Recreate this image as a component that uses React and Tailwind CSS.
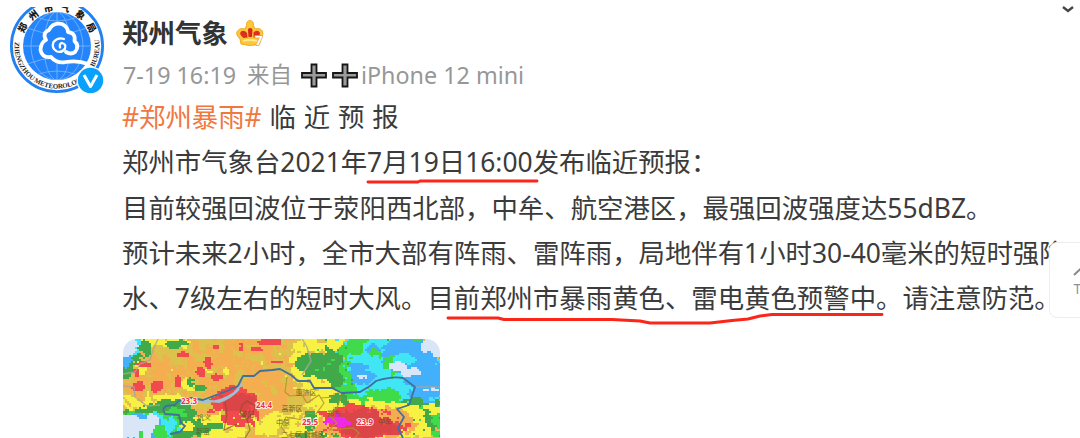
import React from "react";

const PALETTE = {
  m: "#dcc24c", o: "#f5ae4f", y: "#f6f142", r: "#f04a4e", R: "#dc4648",
  g: "#42a94a", G: "#40db4a", c: "#40e6f3", b: "#43b0fb", w: "#d9e6f7", p: "#ef2be6",
};

// cx, cy, rx, ry, intensity band, density
const BLOBS = [
  [70, 32, 62, 20, "o", 0.3], [145, 54, 26, 26, "o", 0.7], [25, 45, 24, 15, "o", 0.55],
  [125, 12, 34, 12, "o", 0.5], [172, 14, 12, 12, "o", 0.4], [95, 46, 20, 10, "o", 0.5],
  [28, 63, 42, 8, "y", 0.6], [42, 3, 24, 5, "y", 0.7], [14, 28, 9, 9, "y", 0.4],
  [70, 46, 14, 7, "y", 0.4], [95, 32, 14, 4, "y", 0.3], [45, 28, 12, 4, "y", 0.2],
  [170, 88, 44, 12, "y", 0.6], [95, 90, 30, 13, "y", 0.8], [190, 22, 22, 30, "y", 0.7],
  [208, 56, 20, 14, "y", 0.9], [195, 70, 12, 10, "y", 0.3],
  [6, 8, 20, 14, "g"], [3, 25, 8, 14, "g"], [4, 6, 14, 14, "c"], [2, 18, 7, 12, "b"], [4, 6, 9, 13, "w"],
  [53, 5, 10, 5, "g"], [68, 44, 4, 5, "g", 0.8], [76, 49, 6, 3, "g", 0.8],
  [17, 48, 7, 5, "r"], [34, 48, 8, 5, "r"], [22, 25, 7, 3, "r"], [14, 34, 3, 5, "r"],
  [55, 42, 3, 7, "r"], [60, 16, 6, 3, "r"], [77, 33, 4, 5, "r"], [85, 24, 4, 6, "r"],
  [93, 38, 6, 3, "r"], [94, 8, 3, 3, "r"], [146, 3, 11, 4, "r"], [133, 10, 7, 2, "r"],
  [153, 23, 7, 2, "r", 0.7], [118, 8, 3, 4, "r", 0.7],
  [112, 64, 22, 15, "r"], [115, 63, 18, 12, "R"], [102, 53, 9, 5, "r"], [112, 82, 16, 6, "r", 0.7], [130, 76, 7, 10, "r", 0.8],
  [44, 72, 24, 11, "g"], [15, 81, 44, 11, "g"], [55, 83, 20, 17, "g"], [54, 74, 10, 6, "G"], [20, 88, 38, 16, "G"],
  [75, 90, 11, 9, "g"], [92, 87, 8, 4, "g"], [64, 87, 8, 5, "y"], [90, 97, 12, 4, "y"], [60, 96, 10, 4, "g"],
  [22, 89, 31, 14, "c"], [15, 89, 27, 14, "b"], [12, 89, 23, 12, "w"], [28, 80, 9, 7, "w"],
  [37, 94, 7, 8, "G"], [18, 97, 3, 4, "G"],
  [215, 9, 14, 14, "g"], [196, 24, 23, 12, "g"], [218, 34, 28, 13, "g"], [184, 25, 12, 6, "g"],
  [270, 25, 58, 38, "G"], [262, 55, 46, 14, "G"], [212, 3, 10, 7, "y"],
  [256, 20, 36, 26, "c"], [278, 30, 45, 33, "c"], [293, 54, 27, 12, "c"], [248, 49, 22, 9, "c"], [225, 50, 10, 4, "G"],
  [290, 14, 28, 17, "b"], [304, 39, 20, 27, "b"], [240, 37, 11, 10, "b"], [250, 10, 7, 6, "b"], [236, 28, 10, 4, "b"],
  [268, 28, 7, 12, "G", 0.6], [252, 16, 5, 9, "G", 0.6], [280, 20, 12, 6, "c", 0.8], [266, 10, 4, 12, "g", 0.2],
  [256, 59, 22, 9, "G"], [232, 8, 9, 8, "G"],
  [313, 5, 12, 11, "w"], [276, 27, 10, 4, "w"], [288, 33, 9, 4, "w"], [307, 51, 8, 2, "w", 0.5], [240, 38, 4, 2, "w", 0.5],
  [298, 78, 36, 17, "g"], [309, 83, 16, 14, "G", 0.6], [292, 91, 14, 9, "y", 0.8], [305, 70, 17, 5, "y", 0.7],
  [276, 76, 23, 13, "y"], [240, 83, 50, 20, "y"], [188, 82, 7, 10, "g", 0.8], [213, 62, 14, 6, "g", 0.7],
  [240, 84, 46, 16, "o"], [270, 82, 16, 12, "o"],
  [230, 79, 30, 12, "r"], [246, 89, 37, 10, "r"], [236, 80, 26, 10, "R"], [248, 89, 30, 8, "R"],
  [210, 81, 9, 4, "p"], [218, 84, 9, 4, "p"], [216, 76, 5, 3, "p", 0.8],
  [190, 96, 22, 3, "g", 0.5],
];

function hash(x, y) {
  const n = Math.sin(x * 127.1 + y * 311.7) * 43758.5453;
  return n - Math.floor(n);
}

function noise(x, y) {
  const i = Math.floor(x), j = Math.floor(y);
  const u = x - i, v = y - j;
  const a = hash(i, j) * (1 - u) + hash(i + 1, j) * u;
  const b = hash(i, j + 1) * (1 - u) + hash(i + 1, j + 1) * u;
  return a * (1 - v) + b * v;
}

const CELL = 2;

function buildCells() {
  const paths = {};
  for (let y = 0; y < 100; y += CELL) {
    for (let x = 0; x < 318; x += CELL) {
      const texture = noise(x / 6 + 40, y / 6 + 9) * 0.7 + noise(x / 2.7, y / 2.7 + 30) * 0.3;
      let band = texture > 0.68 ? "o" : texture < 0.2 ? "y" : "m";
      BLOBS.forEach(([cx, cy, rx, ry, color, density = 1], k) => {
        const d = Math.hypot((x + 1 - cx) / rx, (y + 1 - cy) / ry);
        if (d > 1.5) return;
        const edge = (noise(x / 6 + k * 3.7, y / 6 + k) - 0.5) * 0.7 + (noise(x / 2.5 + k, y / 2.5) - 0.5) * 0.35;
        const grain = noise(x / 6 + k * 9, y / 6 + 60) * 0.7 + noise(x / 2.3 + k, y / 2.3 + 11) * 0.3;
        const hole = density < 1 && grain > density * 0.45 + 0.33;
        if (d + edge < 1 && !hole) band = color;
      });
      paths[band] = (paths[band] || "") + `M${x} ${y}h${CELL}v${CELL}h-${CELL}z`;
    }
  }
  return paths;
}

const CELLS = buildCells();

const READINGS = [
  { x: 66, y: 64.5, value: "23.3" },
  { x: 141, y: 69, value: "24.4" },
  { x: 187, y: 86, value: "25.5" },
  { x: 242, y: 86, value: "23.9" },
];

const PLACES = [
  { x: 183, y: 55.5, name: "惠济区" },
  { x: 169, y: 72, name: "高新区" },
  { x: 81, y: 81, name: "巩义" },
  { x: 124, y: 78, name: "荥阳" },
  { x: 160, y: 86, name: "中原" },
  { x: 80, y: 95, name: "新密" },
  { x: 211, y: 77, name: "郑东" },
  { x: 262, y: 85, name: "中牟" },
  { x: 180, y: 98, name: "二七区 管城区" },
];

function RadarMap() {
  return (
    <svg viewBox="0 0 317 99" className="block h-[99px] w-[317px] rounded-t-[14px]" aria-label="雷达回波">
      <g shapeRendering="crispEdges">
        {Object.entries(CELLS).map(([band, d]) => (
          <path key={band} d={d} fill={PALETTE[band]} />
        ))}
      </g>
      <g fill="none" strokeLinejoin="round">
        <path d="M35 0L30 11L27 21L17 25L12 33L0 35M0 47L11 48L12 58L24 67L37 66M178 -2L184 8L188 22L179 36M290 48H317" stroke="#aaa59a" strokeWidth="1.4" opacity=".8" />
        <path d="M73 62Q94 66 111 54L119 45M78 61L96 63Q108 59 116 50" stroke="#9cc3d5" strokeWidth="2" />
        <path d="M40 70L43 67L52 66Q57 58 68 59L80 61L93 56L104 52L115 47L120 37L131 37L137 32L149 31L157 30L168 36L175 42L187 42L191 49L209 49L219 54L237 53L247 47L253 42Q269 37 280 39L292 48L286 66L274 70L281 78L275 89L280 99M40 70L42 75L56 76L58 84L62 87L57 93L47 95" stroke="#416f9e" strokeWidth="1.8" />
        <path d="M164 38L162 53L167 57L179 56L184 64L196 56L201 64L193 75L184 74L180 81L163 78L158 88L165 97L187 94L202 99M197 59L211 58M218 58L214 69L206 76L214 84L206 91L230 89L236 94L232 99" stroke="#b0932a" strokeWidth="1.2" opacity=".85" />
        <path d="M119 66L124 62L132 67L130 74L124 80L117 74ZM124 80L127 91L122 99M102 63L104 75L101 91L114 85" stroke="#86502a" strokeWidth="1.1" opacity=".7" />
      </g>
      <g fontFamily="Noto Sans CJK SC, sans-serif" fontSize="7" fill="#5f5524" opacity=".85" textAnchor="middle">
        {PLACES.map((p) => (
          <text key={p.name} x={p.x} y={p.y}>{p.name}</text>
        ))}
      </g>
      <g fontFamily="Noto Sans, sans-serif" fontWeight="700" fontSize="8" fill="#ee2f46" stroke="#fff" strokeWidth="1.6" paintOrder="stroke" textAnchor="middle">
        {READINGS.map((r) => (
          <text key={r.value} x={r.x} y={r.y}>{r.value}</text>
        ))}
      </g>
    </svg>
  );
}

function Avatar() {
  return (
    <svg viewBox="0 0 104 96" className="block h-24 w-[104px]" aria-label="郑州市气象局">
      <defs>
        <clipPath id="photo"><rect x="8" y="7" width="96" height="90" /></clipPath>
        <clipPath id="globe"><circle cx="57" cy="46" r="34" /></clipPath>
        <path id="upper" d="M21.500 46A35.500 35.500 0 0 1 92.500 46" />
        <path id="lower" d="M14.800 41A42.500 42.500 0 1 0 99.200 41" />
      </defs>
      <g clipPath="url(#photo)">
        <circle cx="57" cy="46" r="45.600" fill="#fff" stroke="#2280f0" strokeWidth="2.800" />
        <circle cx="57" cy="46" r="34" fill="#2484fb" />
        <g clipPath="url(#globe)" fill="none" stroke="#8abfff" strokeWidth=".7">
          <ellipse cx="57" cy="46" rx="13" ry="34" />
          <ellipse cx="57" cy="46" rx="26" ry="34" />
          <path d="M57 11V81M22 46H92M27 28Q57 40 87 28M27 64Q57 52 87 64M36 17Q57 25 78 17M36 75Q57 67 78 75" />
        </g>
        <path d="M88 64Q78 60 66 62Q57 64 51 57Q42 58 40.500 50Q41 42 46 40Q42 33 49 30Q53 22 62 24Q68 27 68 32Q76 33 74.500 41Q80 46 75 52Q71 55 66 52" fill="#2484fb" stroke="#fff" strokeWidth="3.800" strokeLinecap="round" strokeLinejoin="round" />
        <path d="M60 47.500Q59 43.500 62 43Q66.500 44 65 48.500Q62 53 57 51.500Q51 48.500 53.500 42Q58 37 64 39" fill="none" stroke="#fff" strokeWidth="2.300" strokeLinecap="round" />
        <text fontFamily="Noto Sans CJK SC, sans-serif" fontWeight="900" fontSize="9.500" fill="#191919" textLength="86">
          <textPath href="#upper" startOffset="12.500">郑州市气象局</textPath>
        </text>
        <text fontFamily="Liberation Serif, serif" fontWeight="700" fontSize="6.900" fill="#26262b" textLength="144" lengthAdjust="spacing">
          <textPath href="#lower" startOffset="1">ZHENGZHOU METEOROLOGICAL BUREAU</textPath>
        </text>
      </g>
      <circle cx="90.500" cy="80.500" r="14" fill="#fff" />
      <circle cx="90.500" cy="80.500" r="12.700" fill="#08a2fd" />
      <path d="M84 75L90.500 86.500L97 75" fill="none" stroke="#fff" strokeWidth="3" strokeLinejoin="round" />
    </svg>
  );
}

function Crown() {
  return (
    <svg viewBox="0 0 28 28" className="h-7 w-7" aria-label="会员">
      <path d="M5 25L4 20Q-1 15 1.500 12Q4 8.500 9 10L10.500 6.500Q10 2 14 1.500Q18 2 17.500 6.500L19 10Q24 8.500 26.500 12Q28 15 24.500 20L23.500 25Q14 28 5 25Z" fill="#fcc73a" stroke="#f3ab22" strokeWidth="1" />
      <path d="M7.500 19Q2.500 15 5 12.500Q8 10.500 11 14L11.500 18.500Z" fill="#dd2f20" />
      <path d="M12 11Q12 9 14 9Q16.500 9 16.500 11L16 18H12.500Z" fill="#d9261b" />
      <path d="M17.500 18.500L17.500 13.500Q21 10.500 23.500 13Q25 16 21.500 19Z" fill="#dd2f20" />
      <path d="M7 22Q14 20 21 22" fill="none" stroke="#ffea8b" strokeWidth="1.800" />
      <text x="19" y="26" fontFamily="Noto Sans, sans-serif" fontSize="13" fontWeight="700" fill="#fff" stroke="#eea323" strokeWidth="1.500" paintOrder="stroke">7</text>
    </svg>
  );
}

function Plus() {
  return (
    <svg viewBox="0 0 28 26" className="h-[26px] w-7">
      <path d="M11.500 2.500H16.500V11H26V15.500H16.500V24.500H11.500V15.500H2V11H11.500Z" fill="#9b9b9b" stroke="#161616" strokeWidth="1.800" />
    </svg>
  );
}

function BackToTop() {
  return (
    <button className="absolute left-[1049px] top-[242px] h-[76px] w-[76px] rounded-lg border border-[#ededed] bg-white">
      <span className="flex h-full w-full flex-col items-center justify-center">
        <svg viewBox="0 0 28 14" className="h-[14px] w-7" fill="none" stroke="#898989" strokeWidth="2">
          <path d="M1 13L14 1L27 13" />
        </svg>
        <span className="mt-1 text-[14px] leading-[18px] text-[#929292]">TOP</span>
      </span>
    </button>
  );
}

export default function App() {
  return (
    <div className="relative h-[438px] w-[1080px] overflow-hidden bg-white font-['Noto_Sans','Noto_Sans_CJK_SC',sans-serif] text-[#333333]">
      <header className="flex h-[95px]">
        <Avatar />
        <div className="ml-[18px] flex flex-col pt-[13px]">
          <div className="flex h-10 items-center gap-[8px]">
            <h1 className="whitespace-nowrap text-[26.5px] font-bold leading-10">郑州气象</h1>
            <Crown />
          </div>
          <div className="ml-px mt-[4px] flex h-9 items-center whitespace-nowrap text-[23.3px] leading-9 text-[#979797]">
            <span className="w-[124px]">7-19 16:19</span>
            <span className="text-[22.5px]">来自</span>
            <span className="ml-[8px] flex gap-[3px]">
              <Plus />
              <Plus />
            </span>
            <span className="ml-[2px]">iPhone 12 mini</span>
          </div>
        </div>
      </header>
      <main className="pl-[123px]">
        <div className="-ml-px whitespace-nowrap text-[26.4px] font-normal leading-[45.3px] text-[#3b3b3b]">
          <p className="[word-spacing:1px]"><span className="text-[#f0783f]">#郑州暴雨#</span> 临 近 预 报</p>
          <p>郑州市气象台2021年7月19日16:00发布临近预报：</p>
          <p>目前较强回波位于荥阳西北部，中牟、航空港区，最强回波强度达55dBZ。</p>
          <p>预计未来2小时，全市大部有阵雨、雷阵雨，局地伴有1小时30-40毫米的短时强降</p>
          <p>水、7级左右的短时大风。目前郑州市暴雨黄色、雷电黄色预警中。请注意防范。</p>
        </div>
        <figure className="mt-[17.5px]">
          <RadarMap />
        </figure>
      </main>
      <svg viewBox="0 0 1080 438" className="pointer-events-none absolute inset-0 h-[438px] w-[1080px]" fill="none" stroke="#fb2518" strokeWidth="2.900" strokeLinecap="round" strokeLinejoin="round">
        <path d="M368 182H418L420 181H537" />
        <path d="M448 318H498L504 319.500H612L640 321L650 323H710L732 320.500L748 319L760 316L772 314.500H882" />
      </svg>
      <svg viewBox="0 0 14 8" className="absolute left-[1061px] top-[5px] h-2 w-[14px]" fill="none" stroke="#454545" strokeWidth="2.400">
        <path d="M2 2L7 6L12 2" />
      </svg>
      <BackToTop />
    </div>
  );
}
